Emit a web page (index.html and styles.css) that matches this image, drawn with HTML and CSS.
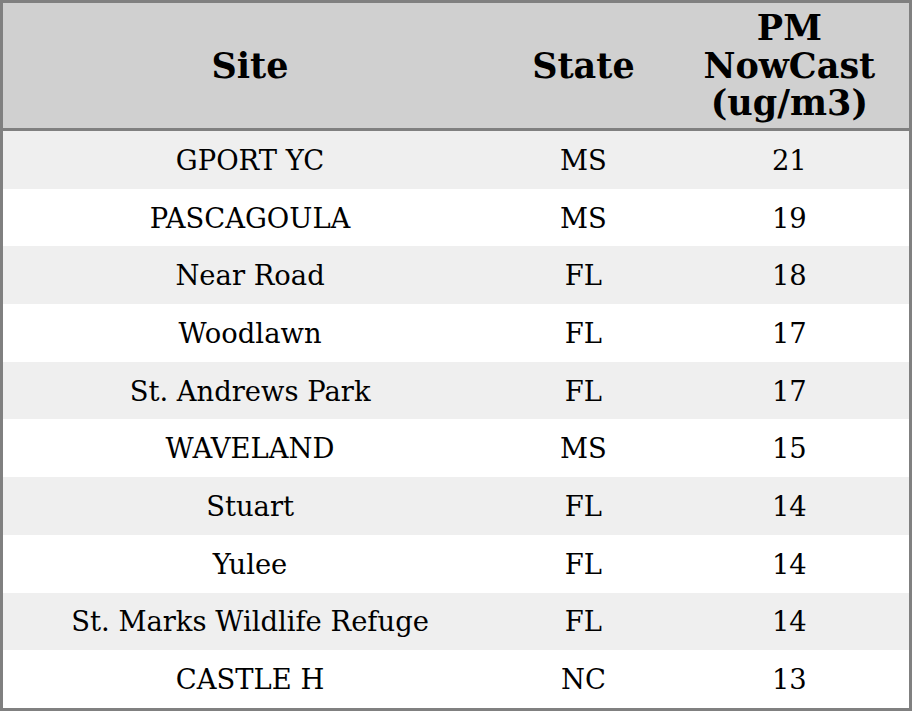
FILE: index.html
```html
<!DOCTYPE html>
<html>
<head>
<meta charset="utf-8">
<link rel="stylesheet" href="styles.css">
</head>
<body>
<table class="aq">
  <colgroup>
    <col class="c-site">
    <col class="c-state">
    <col class="c-pm">
  </colgroup>
  <thead>
    <tr><th>Site</th><th>State</th><th>PM<br>NowCast<br>(ug/m3)</th></tr>
  </thead>
  <tbody>
    <tr><td>GPORT YC</td><td>MS</td><td>21</td></tr>
    <tr><td>PASCAGOULA</td><td>MS</td><td>19</td></tr>
    <tr><td>Near Road</td><td>FL</td><td>18</td></tr>
    <tr><td>Woodlawn</td><td>FL</td><td>17</td></tr>
    <tr><td>St. Andrews Park</td><td>FL</td><td>17</td></tr>
    <tr><td>WAVELAND</td><td>MS</td><td>15</td></tr>
    <tr><td>Stuart</td><td>FL</td><td>14</td></tr>
    <tr><td>Yulee</td><td>FL</td><td>14</td></tr>
    <tr><td>St. Marks Wildlife Refuge</td><td>FL</td><td>14</td></tr>
    <tr><td>CASTLE H</td><td>NC</td><td>13</td></tr>
  </tbody>
</table>
</body>
</html>
```

FILE: styles.css
```css
html, body {
  margin: 0;
  padding: 0;
  background: #ffffff;
}
.aq {
  width: 912px;
  height: 711px;
  border-collapse: collapse;
  border: 3px solid #808080;
  font-family: "DejaVu Serif", serif;
  color: #000;
  table-layout: fixed;
}
.c-site { width: 494px; }
.c-state { width: 172px; }
.c-pm { width: 240px; }
.aq th {
  background: #d0d0d0;
  font-size: 35px;
  font-weight: bold;
  line-height: 37.5px;
  height: 125px;
  padding: 0;
  text-align: center;
  vertical-align: middle;
  border-bottom: 3px solid #808080;
}
.aq td {
  font-size: 27.4px;
  line-height: 30px;
  padding: 2px 0 0 0;
  height: 55.7px;
  text-align: center;
  vertical-align: middle;
}
.aq tbody tr:nth-child(odd) td {
  background: #efefef;
}
```
